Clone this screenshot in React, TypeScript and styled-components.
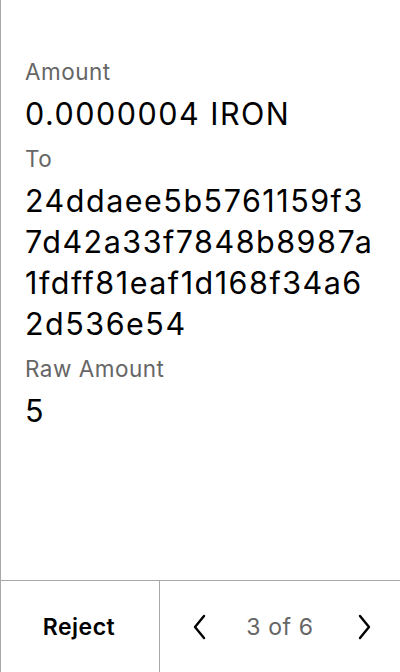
import React from "react";
import styled, { createGlobalStyle } from "styled-components";

const Global = createGlobalStyle`
  html, body { margin: 0; padding: 0; background: #fff; }
  body { font-family: Inter, "Noto Sans", sans-serif; -webkit-font-smoothing: antialiased; }
  * { box-sizing: border-box; }
`;

const Page = styled.div`
  width: 400px;
  height: 672px;
  display: flex;
  flex-direction: column;
  border-left: 1px solid #a8a8a8;
  background: #fff;
`;

const Content = styled.div`
  flex: 1;
  padding: 58px 24px 0 24px;
  display: flex;
  flex-direction: column;
  gap: 11px;
`;

const Field = styled.div`
  display: flex;
  flex-direction: column;
  gap: 7px;
`;

const Label = styled.div`
  font-size: 22.5px;
  line-height: 28px;
  letter-spacing: 0.5px;
  color: #666;
`;

const Value = styled.div`
  font-size: 30.5px;
  line-height: 41px;
  letter-spacing: 1.5px;
  color: #000;
  word-break: break-all;
`;

const Footer = styled.div`
  height: 92px;
  border-top: 1px solid #a8a8a8;
  display: grid;
  grid-template-columns: 159px 1fr;
`;

const RejectButton = styled.button`
  border: none;
  border-right: 1px solid #a8a8a8;
  background: transparent;
  font-family: inherit;
  font-size: 23px;
  letter-spacing: 0.5px;
  font-weight: 600;
  color: #000;
  padding: 0 2px 0 0;
  display: flex;
  align-items: center;
  justify-content: center;
`;

const Pager = styled.div`
  display: flex;
  align-items: center;
  justify-content: space-between;
  padding: 0 24px 0 28px;
`;

const PageText = styled.span`
  font-size: 23px;
  letter-spacing: 0.6px;
  color: #666;
  margin-right: 4px;
`;

const Arrow = styled.button`
  border: none;
  background: transparent;
  padding: 0;
  width: 24px;
  height: 32px;
  display: flex;
  align-items: center;
  justify-content: center;
`;

const Chevron = ({ dir }: { dir: "left" | "right" }) => (
  <svg width="16" height="28" viewBox="0 0 16 28" fill="none">
    <path
      d={dir === "left" ? "M12 3 L3 14 L12 25" : "M4 3 L13 14 L4 25"}
      stroke="#000"
      strokeWidth="2.4"
      strokeLinecap="round"
      strokeLinejoin="round"
    />
  </svg>
);

export default function App() {
  return (
    <>
      <Global />
      <Page>
        <Content>
          <Field>
            <Label>Amount</Label>
            <Value>0.0000004 IRON</Value>
          </Field>
          <Field>
            <Label>To</Label>
            <Value>24ddaee5b5761159f37d42a33f7848b8987a1fdff81eaf1d168f34a62d536e54</Value>
          </Field>
          <Field>
            <Label>Raw Amount</Label>
            <Value>5</Value>
          </Field>
        </Content>
        <Footer>
          <RejectButton>Reject</RejectButton>
          <Pager>
            <Arrow><Chevron dir="left" /></Arrow>
            <PageText>3 of 6</PageText>
            <Arrow><Chevron dir="right" /></Arrow>
          </Pager>
        </Footer>
      </Page>
    </>
  );
}
